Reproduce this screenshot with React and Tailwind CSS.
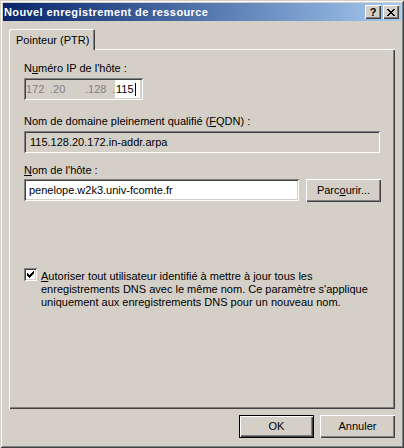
import React from "react";

const raised =
  "shadow-[inset_1px_1px_0_#ffffff,inset_-1px_-1px_0_#404040,inset_-2px_-2px_0_#808080]";
const sunken =
  "shadow-[inset_1px_1px_0_#808080,inset_-1px_-1px_0_#ffffff,inset_2px_2px_0_#404040,inset_-2px_-2px_0_#d4d0c8]";

const CheckMark = () => (
  <svg width="13" height="13" viewBox="0 0 13 13" shapeRendering="crispEdges">
    <rect x="3" y="5" width="1" height="3" fill="#000" />
    <rect x="4" y="6" width="1" height="3" fill="#000" />
    <rect x="5" y="7" width="1" height="3" fill="#000" />
    <rect x="6" y="6" width="1" height="3" fill="#000" />
    <rect x="7" y="5" width="1" height="3" fill="#000" />
    <rect x="8" y="4" width="1" height="3" fill="#000" />
    <rect x="9" y="3" width="1" height="3" fill="#000" />
  </svg>
);

const CloseGlyph = () => (
  <svg width="8" height="7" viewBox="0 0 8 7" shapeRendering="crispEdges">
    <path d="M0 0h2v1H0zM1 1h2v1H1zM2 2h4v1H2zM3 3h2v1H3zM2 4h4v1H2zM1 5h2v1H1zM0 6h2v1H0zM6 0h2v1H6zM5 1h2v1H5zM5 5h2v1H5zM6 6h2v1H6z" fill="#000" />
  </svg>
);

export default function App() {
  return (
    <div
      className={`w-[404px] h-[448px] bg-[#d4d0c8] p-[3px] flex flex-col text-[11px] leading-[13px] text-black font-['Liberation_Sans',Arial,sans-serif] shadow-[inset_1px_1px_0_#d4d0c8,inset_-1px_-1px_0_#404040,inset_2px_2px_0_#ffffff,inset_-2px_-2px_0_#808080]`}
    >
      {/* title bar */}
      <div className="h-[18px] flex items-center pl-[1px] pr-[2px] bg-gradient-to-r from-[#0a246a] to-[#a6caf0]">
        <span className="text-white font-bold text-[11px] tracking-[0.4px]">
          Nouvel enregistrement de ressource
        </span>
        <div className="ml-auto flex gap-[2px]">
          <div
            className={`w-[16px] h-[14px] bg-[#d4d0c8] ${raised} flex items-center justify-center font-bold text-[11px] leading-none`}
          >
            ?
          </div>
          <div
            className={`w-[16px] h-[14px] bg-[#d4d0c8] ${raised} flex items-center justify-center`}
          >
            <CloseGlyph />
          </div>
        </div>
      </div>

      {/* tabs */}
      <div className="pl-[6px] mt-[8px]">
        <div className="relative z-10 -mb-px w-[86px] h-[21px] bg-[#d4d0c8] rounded-tl-[2px] rounded-tr-[2px] shadow-[inset_1px_1px_0_#ffffff,inset_-1px_0_0_#404040,inset_-2px_0_0_#808080] pl-[7px] pt-[5px]">
          Pointeur (PTR)
        </div>
        <div
          className={`w-[386px] h-[360px] bg-[#d4d0c8] ${raised} pl-[15px] pt-[13px] flex flex-col`}
        >
          <div className="h-[13px]">
            N<span className="underline">u</span>méro IP de l'hôte :
          </div>
          <div
            className={`mt-[3px] w-[119px] h-[22px] ${sunken} flex items-center text-[#808080] pl-[2px]`}
          >
            <span className="w-[24px]">172</span>
            <span className="w-[35px]">.20</span>
            <span className="w-[27px]">.128</span>
            <span className="w-[3px]">.</span>
            <span className="w-[25px] h-[18px] bg-white text-black flex items-center pl-[1px]">
              115<span className="w-px h-[13px] bg-black ml-px" />
            </span>
          </div>

          <div className="mt-[15px] h-[13px]">
            Nom de domaine pleinement qualifié (<span className="underline">F</span>QDN) :
          </div>
          <div
            className={`mt-[3px] w-[356px] h-[22px] ${sunken} flex items-center pl-[6px]`}
          >
            115.128.20.172.in-addr.arpa
          </div>

          <div className="mt-[11px] h-[13px]">
            <span className="underline">N</span>om de l'hôte :
          </div>
          <div className="mt-[2px] flex gap-[7px]">
            <div
              className={`w-[275px] h-[22px] bg-white ${sunken} flex items-center pl-[5px]`}
            >
              penelope.w2k3.univ-fcomte.fr
            </div>
            <div
              className={`w-[75px] h-[23px] ${raised} flex items-center justify-center`}
            >
              Parc<span className="underline">o</span>urir...
            </div>
          </div>

          <div className="mt-[66px] flex items-start gap-[4px]">
            <div className={`w-[13px] h-[13px] shrink-0 bg-white ${sunken}`}>
              <CheckMark />
            </div>
            <div className="mt-[2px]">
              <span className="underline">A</span>utoriser tout utilisateur identifié à mettre à jour tous les
              <br />
              enregistrements DNS avec le même nom. Ce paramètre s'applique
              <br />
              uniquement aux enregistrements DNS pour un nouveau nom.
            </div>
          </div>
        </div>

        {/* buttons */}
        <div className="w-[386px] mt-[6px] flex justify-end gap-[6px]">
          <div className="w-[75px] h-[23px] border border-black flex items-center justify-center shadow-[inset_1px_1px_0_#ffffff,inset_-1px_-1px_0_#404040,inset_-2px_-2px_0_#808080]">
            OK
          </div>
          <div
            className={`w-[75px] h-[23px] ${raised} flex items-center justify-center`}
          >
            Annuler
          </div>
        </div>
      </div>
    </div>
  );
}
